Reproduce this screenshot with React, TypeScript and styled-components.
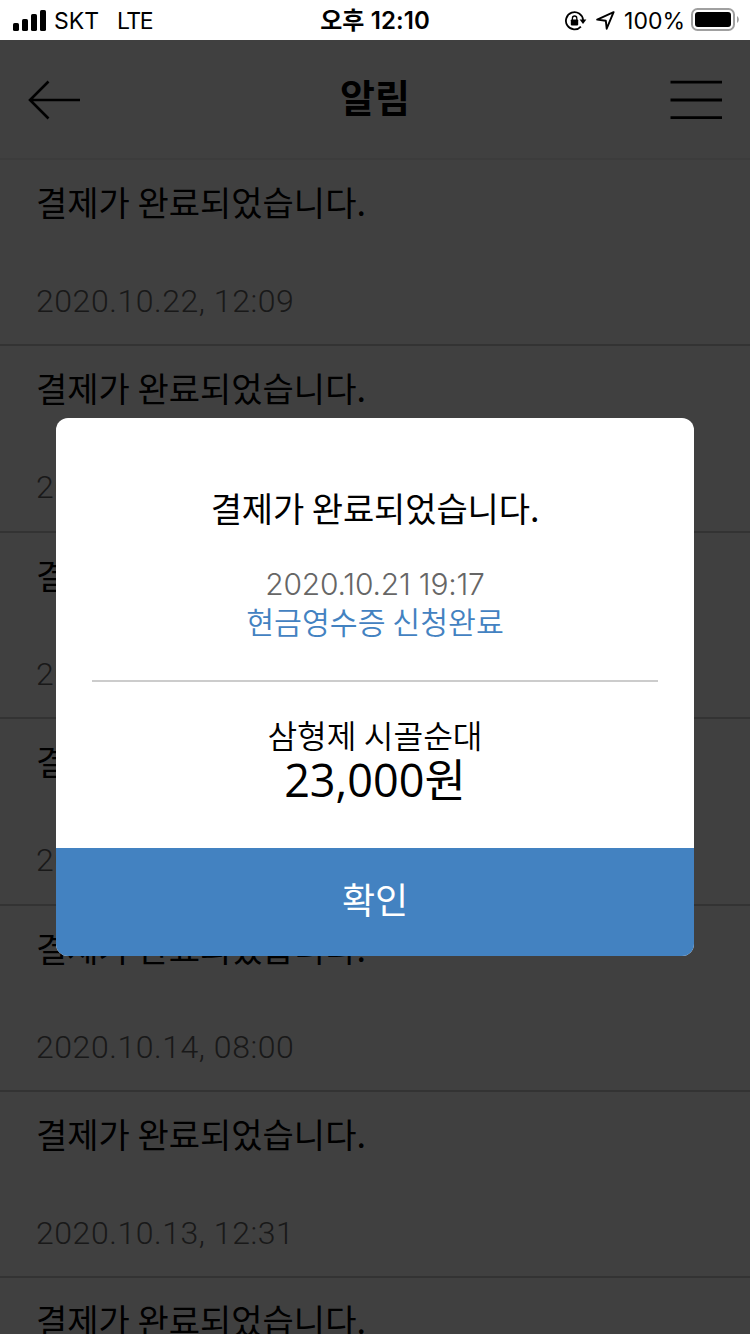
import React from 'react';
import styled, { createGlobalStyle } from 'styled-components';

const GlobalStyle = createGlobalStyle`
  * { box-sizing: border-box; }
  html, body { margin: 0; padding: 0; height: 100%; overflow: hidden; background: #fff; }
  body { font-family: 'Noto Sans CJK KR', sans-serif; color: #000; }
`;

const Screen = styled.div`
  width: 750px;
  height: 1334px;
  display: flex;
  flex-direction: column;
  overflow: hidden;
`;

const StatusBar = styled.header`
  flex: none;
  height: 40px;
  display: grid;
  grid-template-columns: 250px 250px 250px;
  align-items: center;
  background: #fff;
  font-family: Inter, 'Noto Sans CJK KR', sans-serif;
  font-size: 23px;
  line-height: 38px;
`;

const StatusLeft = styled.div`
  display: flex;
  align-items: center;
  padding-left: 13px;
  white-space: nowrap;
`;

const Carrier = styled.span`
  width: 63px;
  margin-left: 8px;
  padding-top: 2px;
`;

const Network = styled.span`
  padding-top: 2px;
  letter-spacing: -1.5px;
`;

const Clock = styled.div`
  padding-top: 2px;
  text-align: center;
  font-weight: 600;
  font-size: 24px;
  letter-spacing: 0.1px;
  white-space: nowrap;
`;

const StatusRight = styled.div`
  display: flex;
  align-items: center;
  justify-content: flex-end;
  padding-right: 11px;
`;

const StatusIcons = styled.div`
  display: flex;
  align-items: center;
  gap: 9px;
  padding: 1px 1px 0 0;
`;

const BatteryLevel = styled.span`
  margin: 0 6px 0 8px;
  padding-top: 2px;
`;

const Page = styled.main`
  position: relative;
  flex: 1;
  min-height: 0;
  overflow: hidden;
`;

const NavBar = styled.div`
  height: 119.88px;
  padding: 2px 28px 0;
  display: flex;
  align-items: center;
  justify-content: space-between;
  border-bottom: 2px solid #eee;
`;

const PageTitle = styled.h1`
  margin: 0;
  padding-bottom: 8px;
  font-size: 38px;
  line-height: 54px;
  font-weight: 700;
`;

const NoticeItem = styled.article`
  height: 186.42px;
  padding: 17px 36px 0;
  border-bottom: 2px solid #ccc;
`;

const NoticeTitle = styled.h2`
  margin: 0;
  font-size: 34px;
  line-height: 50px;
  font-weight: 400;
  white-space: nowrap;
`;

const NoticeDate = styled.time`
  display: block;
  margin-top: 54px;
  font-family: Roboto, sans-serif;
  font-weight: 300;
  font-size: 32px;
  line-height: 40px;
  letter-spacing: 0.55px;
  color: #666;
  white-space: nowrap;
`;

const Backdrop = styled.div`
  position: absolute;
  inset: 0;
  padding-top: 378px;
  display: flex;
  justify-content: center;
  align-items: flex-start;
  background: rgba(0, 0, 0, 0.75);
`;

const Dialog = styled.section`
  width: 638px;
  height: 538px;
  display: flex;
  flex-direction: column;
  overflow: hidden;
  border-radius: 12px;
  background: #fff;
  text-align: center;
  white-space: nowrap;
`;

const DialogBody = styled.div`
  flex: 1;
  padding: 65px 36px 0;
`;

const DialogTitle = styled.h2`
  margin: 0 0 33px;
  font-size: 34px;
  line-height: 50px;
  font-weight: 400;
  letter-spacing: -0.1px;
`;

const PaidAt = styled.p`
  margin: 0;
  font-family: Inter, sans-serif;
  font-weight: 300;
  font-size: 30px;
  line-height: 37px;
  letter-spacing: -0.2px;
  color: #666;
`;

const ReceiptState = styled.p`
  margin: 0;
  font-weight: 350;
  font-size: 30.3px;
  line-height: 36px;
  color: #4382c1;
`;

const Divider = styled.hr`
  height: 2px;
  margin: 41px 0 30px;
  border: 0;
  background: #ccc;
`;

const Shop = styled.p`
  margin: 0;
  font-weight: 350;
  font-size: 32.3px;
  line-height: 44px;
`;

const Amount = styled.p`
  margin: 0;
  font-family: 'Open Sans', 'Noto Sans CJK KR', sans-serif;
  font-size: 45px;
  line-height: 48px;
`;

const ConfirmButton = styled.button`
  flex: none;
  height: 108px;
  padding: 0 0 8px;
  border: 0;
  background: #4382c1;
  color: #fff;
  font: 400 36px/50px 'Noto Sans CJK KR', sans-serif;
`;

const notices = [
  '2020.10.22, 12:09',
  '2020.10.21, 19:17',
  '2020.10.20, 12:24',
  '2020.10.16, 12:15',
  '2020.10.14, 08:00',
  '2020.10.13, 12:31',
  '2020.10.12, 12:20',
];

const SignalIcon = () => (
  <svg width="33" height="21" viewBox="0 0 33 21">
    <rect x="0" y="13" width="6" height="8" rx="1.6" />
    <rect x="9" y="9" width="6" height="12" rx="1.6" />
    <rect x="18" y="4" width="6" height="17" rx="1.6" />
    <rect x="27" y="0" width="6" height="21" rx="1.6" />
  </svg>
);

const RotationLockIcon = () => (
  <svg width="22" height="20" viewBox="0 0 22 20" fill="none" stroke="#000">
    <path d="M15.9 15.6A8.6 8.6 0 1 1 18.1 9" strokeWidth="1.8" />
    <path d="M14.6 8.4h6.8L18 13z" fill="#000" stroke="none" />
    <rect x="5.8" y="8.4" width="7.4" height="6" rx="0.8" fill="#000" stroke="none" />
    <path d="M7.4 9V7.2a2.2 2.2 0 0 1 4.4 0V9" strokeWidth="1.3" />
  </svg>
);

const LocationIcon = () => (
  <svg width="19" height="19" viewBox="0 0 19 19" fill="none" stroke="#000" strokeWidth="1.9" strokeLinejoin="round">
    <path d="M17.6 1.2 1.2 8.6l8.6 1.1.9 8z" />
  </svg>
);

const BatteryIcon = () => (
  <svg width="48" height="24" viewBox="0 0 48 24">
    <rect x="1" y="1" width="42" height="21" rx="5.5" fill="none" stroke="#a0a0a0" strokeWidth="2" />
    <rect x="4" y="4" width="36" height="15" rx="3" />
    <path d="M46 8c2.4 1.4 2.4 5.6 0 7z" fill="#a0a0a0" />
  </svg>
);

const BackIcon = () => (
  <svg width="52" height="40" viewBox="0 0 52 40" fill="none" stroke="#000" strokeWidth="2.6">
    <path d="M52 20H2M20.5 1.5 2 20l18.5 18.5" />
  </svg>
);

const MenuIcon = () => (
  <svg width="52" height="40" viewBox="0 0 52 40" fill="none" stroke="#000" strokeWidth="2.8">
    <path d="M0.5 2.2h51.5M0.5 20h51.5M0.5 37.7h51.5" />
  </svg>
);

export default function App() {
  return (
    <>
      <GlobalStyle />
      <Screen>
        <StatusBar>
          <StatusLeft>
            <SignalIcon />
            <Carrier>SKT</Carrier>
            <Network>LTE</Network>
          </StatusLeft>
          <Clock>오후 12:10</Clock>
          <StatusRight>
            <StatusIcons>
              <RotationLockIcon />
              <LocationIcon />
            </StatusIcons>
            <BatteryLevel>100%</BatteryLevel>
            <BatteryIcon />
          </StatusRight>
        </StatusBar>
        <Page>
          <NavBar>
            <BackIcon />
            <PageTitle>알림</PageTitle>
            <MenuIcon />
          </NavBar>
          {notices.map((date) => (
            <NoticeItem key={date}>
              <NoticeTitle>결제가 완료되었습니다.</NoticeTitle>
              <NoticeDate>{date}</NoticeDate>
            </NoticeItem>
          ))}
          <Backdrop>
            <Dialog role="dialog" aria-modal="true">
              <DialogBody>
                <DialogTitle>결제가 완료되었습니다.</DialogTitle>
                <PaidAt>2020.10.21 19:17</PaidAt>
                <ReceiptState>현금영수증 신청완료</ReceiptState>
                <Divider />
                <Shop>삼형제 시골순대</Shop>
                <Amount>23,000원</Amount>
              </DialogBody>
              <ConfirmButton>확인</ConfirmButton>
            </Dialog>
          </Backdrop>
        </Page>
      </Screen>
    </>
  );
}
